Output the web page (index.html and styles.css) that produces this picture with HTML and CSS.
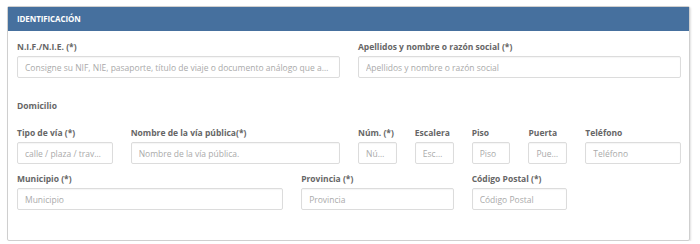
FILE: index.html
```html
<!DOCTYPE html>
<html>
<head>
    <title>Identificación</title>
    <link rel="stylesheet" href="styles.css">
</head>
<body>
    <div class="panel">
        <div class="panel-heading">IDENTIFICACIÓN</div>
        <div class="panel-body">
            <div class="row">
                <div class="field col-6">
                    <label>N.I.F./N.I.E. (*)</label>
                    <input type="text" placeholder="Consigne su NIF, NIE, pasaporte, título de viaje o documento análogo que acredite su identidad">
                </div>
                <div class="field col-6">
                    <label>Apellidos y nombre o razón social (*)</label>
                    <input type="text" placeholder="Apellidos y nombre o razón social">
                </div>
            </div>

            <h4 class="section-title">Domicilio</h4>

            <div class="row row-tight">
                <div class="field col-2">
                    <label>Tipo de vía (*)</label>
                    <input type="text" placeholder="calle / plaza / travesía">
                </div>
                <div class="field col-4">
                    <label>Nombre de la vía pública(*)</label>
                    <input type="text" placeholder="Nombre de la vía pública.">
                </div>
                <div class="field col-1">
                    <label>Núm. (*)</label>
                    <input type="text" placeholder="Número">
                </div>
                <div class="field col-1">
                    <label>Escalera</label>
                    <input type="text" placeholder="Escalera">
                </div>
                <div class="field col-1">
                    <label>Piso</label>
                    <input type="text" placeholder="Piso">
                </div>
                <div class="field col-1">
                    <label>Puerta</label>
                    <input type="text" placeholder="Puerta">
                </div>
                <div class="field col-2">
                    <label>Teléfono</label>
                    <input type="text" placeholder="Teléfono">
                </div>
            </div>

            <div class="row">
                <div class="field col-5">
                    <label>Municipio (*)</label>
                    <input type="text" placeholder="Municipio">
                </div>
                <div class="field col-3">
                    <label>Provincia (*)</label>
                    <input type="text" placeholder="Provincia">
                </div>
                <div class="field col-2">
                    <label>Código Postal (*)</label>
                    <input type="text" placeholder="Código Postal">
                </div>
            </div>
        </div>
    </div>
</body>
</html>
```

FILE: styles.css
```css
/* Basic page setup */
body {
    margin: 0;
    padding: 6px 10px 0 7px;
    background-color: #fff;
    font-family: "Open Sans", "Liberation Sans", sans-serif;
}

.panel {
    border: 1px solid #cfcfcf;
    border-radius: 2px;
    box-shadow: 1px 1px 2px rgba(0, 0, 0, 0.12);
    height: 235px;
    box-sizing: border-box;
}

.panel-heading {
    background-color: #46709e;
    color: #fff;
    font-size: 8px;
    font-weight: bold;
    height: 24px;
    line-height: 24px;
    padding-left: 9px;
    letter-spacing: -0.1px;
}

.panel-body {
    padding: 9px 8px 0 9px;
}

/* 12 column grid */
.row {
    display: grid;
    grid-template-columns: repeat(12, 1fr);
    column-gap: 18px;
    margin-bottom: 10px;
}

.row-tight {
    margin-bottom: 8px;
}

.col-1 { grid-column: span 1; }
.col-2 { grid-column: span 2; }
.col-3 { grid-column: span 3; }
.col-4 { grid-column: span 4; }
.col-5 { grid-column: span 5; }
.col-6 { grid-column: span 6; }

.field {
    display: flex;
    flex-direction: column;
    min-width: 0;
}

.field label {
    font-size: 8.5px;
    font-weight: bold;
    color: #666;
    height: 13px;
    line-height: 13px;
    margin-bottom: 3px;
    white-space: nowrap;
}

.field input {
    height: 22px;
    box-sizing: border-box;
    border: 1px solid #dcdcdc;
    border-radius: 2px;
    padding: 0 7px;
    font-family: inherit;
    font-size: 8.5px;
    color: #555;
    width: 100%;
    min-width: 0;
    text-overflow: ellipsis;
    box-shadow: inset 0 1px 1px rgba(0, 0, 0, 0.04);
}

.field input::placeholder {
    color: #aaa;
}

.section-title {
    font-size: 8.5px;
    font-weight: bold;
    color: #666;
    margin: 21px 0 14px 0;
    line-height: 13px;
}
```
